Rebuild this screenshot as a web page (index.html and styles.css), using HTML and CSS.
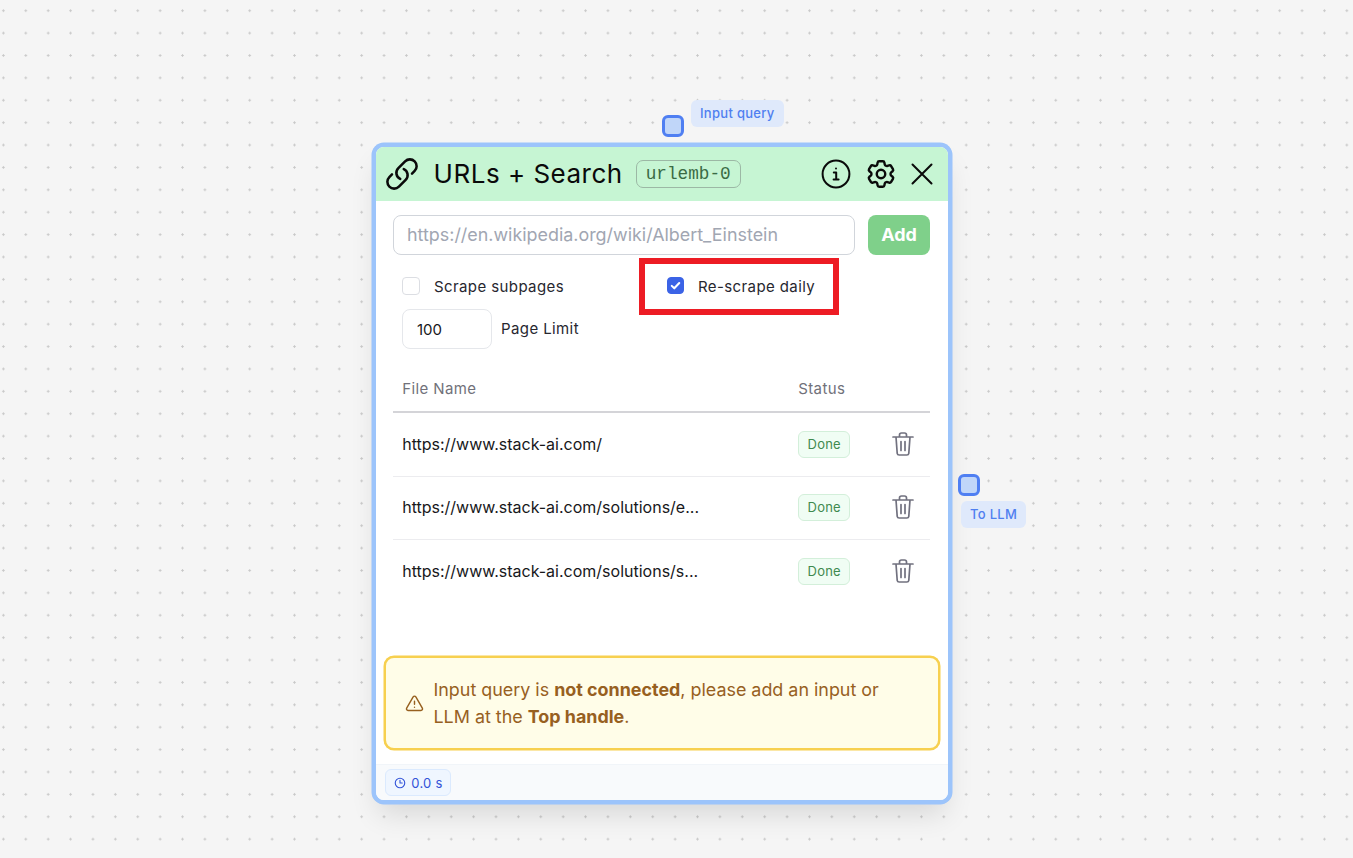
FILE: index.html
```html
<!DOCTYPE html>
<html lang="en">
<head>
<meta charset="utf-8">
<title>URLs + Search</title>
<link rel="stylesheet" href="styles.css">
</head>
<body>
<div class="canvas">
  <div class="node">
    <span class="handle handle-top"></span>
    <span class="tag tag-top">Input query</span>
    <span class="handle handle-right"></span>
    <span class="tag tag-right">To LLM</span>
    <header class="head">
      <svg class="ico-link" viewBox="0 0 24 24" fill="none" stroke="currentColor" stroke-width="1.7" stroke-linecap="round" stroke-linejoin="round"><path d="M13.19 8.688a4.5 4.5 0 0 1 1.242 7.244l-4.5 4.5a4.5 4.5 0 0 1-6.364-6.364l1.757-1.757m13.35-.622 1.757-1.757a4.5 4.5 0 0 0-6.364-6.364l-4.5 4.5a4.5 4.5 0 0 0 1.242 7.244"/></svg>
      <h1 class="title">URLs + Search</h1>
      <span class="code">urlemb-0</span>
      <div class="actions">
        <svg class="ico-act" viewBox="0 0 30 30" fill="none" stroke="currentColor" stroke-width="2" stroke-linecap="round" stroke-linejoin="round"><circle cx="15" cy="15" r="13.4"/><path d="M12.8 13.6h2.4v7m-2.6 0h5"/><circle cx="15" cy="9.4" r="1" fill="currentColor" stroke="none"/></svg>
        <svg class="ico-gear" viewBox="0 0 24 24" fill="none" stroke="currentColor" stroke-width="1.7" stroke-linecap="round" stroke-linejoin="round"><path d="M9.594 3.94c.09-.542.56-.94 1.11-.94h2.593c.55 0 1.02.398 1.11.94l.213 1.281c.063.374.313.686.645.87.074.04.147.083.22.127.325.196.72.257 1.075.124l1.217-.456a1.125 1.125 0 0 1 1.37.49l1.296 2.247a1.125 1.125 0 0 1-.26 1.431l-1.003.827c-.293.241-.438.613-.43.992a7.723 7.723 0 0 1 0 .255c-.008.378.137.75.43.991l1.004.827c.424.35.534.955.26 1.43l-1.298 2.247a1.125 1.125 0 0 1-1.369.491l-1.217-.456c-.355-.133-.75-.072-1.076.124a6.47 6.47 0 0 1-.22.128c-.331.183-.581.495-.644.869l-.213 1.281c-.09.543-.56.94-1.11.94h-2.594c-.55 0-1.019-.398-1.11-.94l-.213-1.281c-.062-.374-.312-.686-.644-.87a6.52 6.52 0 0 1-.22-.127c-.325-.196-.72-.257-1.076-.124l-1.217.456a1.125 1.125 0 0 1-1.369-.49l-1.297-2.247a1.125 1.125 0 0 1 .26-1.431l1.004-.827c.292-.24.437-.613.43-.991a6.932 6.932 0 0 1 0-.255c.007-.38-.138-.751-.43-.992l-1.004-.827a1.125 1.125 0 0 1-.26-1.43l1.297-2.247a1.125 1.125 0 0 1 1.37-.491l1.216.456c.356.133.751.072 1.076-.124.072-.044.146-.086.22-.128.332-.183.582-.495.644-.869l.214-1.28Z"/><circle cx="12" cy="12" r="3"/></svg>
        <svg class="ico-x" viewBox="0 0 22 22" fill="none" stroke="currentColor" stroke-width="2" stroke-linecap="round"><path d="M1.5 1.5l19 19M20.500 1.500l-19 19"/></svg>
      </div>
    </header>
    <main class="body">
      <div class="url-row">
        <input class="url" type="text" placeholder="https://en.wikipedia.org/wiki/Albert_Einstein">
        <button class="add" type="button">Add</button>
      </div>
      <div class="opts">
        <label class="opt opt-sub"><span class="box"></span>Scrape subpages</label>
        <label class="opt opt-daily"><span class="box box-on"><svg viewBox="0 0 16 16" fill="none" stroke="#fff" stroke-width="2.200" stroke-linecap="round" stroke-linejoin="round"><path d="M4 8.400l2.700 2.600L12 5.300"/></svg></span>Re-scrape daily</label>
      </div>
      <div class="limit">
        <span class="num">100</span>
        <span class="limit-label">Page Limit</span>
      </div>
      <div class="thead">
        <span class="c-name">File Name</span>
        <span class="c-status">Status</span>
      </div>
      <div class="row row-first">
        <span class="c-name">https://www.stack-ai.com/</span>
        <span class="c-status"><span class="done">Done</span></span>
        <svg class="trash" viewBox="0 0 24 26" fill="none" stroke="currentColor" stroke-width="1.700" stroke-linecap="round" stroke-linejoin="round"><path d="M2 6h20M5 6l1.200 16.300a2 2 0 0 0 2 1.700h7.600a2 2 0 0 0 2-1.700L19 6M8.500 5.500V4a2 2 0 0 1 2-2h3a2 2 0 0 1 2 2v1.500M10 10.500v9M14 10.500v9"/></svg>
      </div>
      <div class="row">
        <span class="c-name">https://www.stack-ai.com/solutions/e...</span>
        <span class="c-status"><span class="done">Done</span></span>
        <svg class="trash" viewBox="0 0 24 26" fill="none" stroke="currentColor" stroke-width="1.700" stroke-linecap="round" stroke-linejoin="round"><path d="M2 6h20M5 6l1.200 16.300a2 2 0 0 0 2 1.700h7.600a2 2 0 0 0 2-1.700L19 6M8.500 5.500V4a2 2 0 0 1 2-2h3a2 2 0 0 1 2 2v1.500M10 10.500v9M14 10.500v9"/></svg>
      </div>
      <div class="row row-last">
        <span class="c-name">https://www.stack-ai.com/solutions/s...</span>
        <span class="c-status"><span class="done">Done</span></span>
        <svg class="trash" viewBox="0 0 24 26" fill="none" stroke="currentColor" stroke-width="1.700" stroke-linecap="round" stroke-linejoin="round"><path d="M2 6h20M5 6l1.200 16.300a2 2 0 0 0 2 1.700h7.600a2 2 0 0 0 2-1.700L19 6M8.500 5.500V4a2 2 0 0 1 2-2h3a2 2 0 0 1 2 2v1.500M10 10.500v9M14 10.500v9"/></svg>
      </div>
      <div class="warn">
        <svg class="ico-warn" viewBox="0 0 24 24" fill="none" stroke="currentColor" stroke-width="1.800" stroke-linecap="round" stroke-linejoin="round"><path d="M12 9v4m0 3.800h.01M10.300 3.600 2.100 17.800A2 2 0 0 0 3.800 20.800h16.400a2 2 0 0 0 1.700-3L13.700 3.600a2 2 0 0 0-3.400 0Z"/></svg>
        <p class="warn-text">Input query is <b>not connected</b>, please add an input or LLM at the <b>Top handle</b>.</p>
      </div>
    </main>
    <footer class="foot">
      <span class="time">
        <svg class="ico-clock" viewBox="0 0 24 24" fill="none" stroke="currentColor" stroke-width="2.200" stroke-linecap="round" stroke-linejoin="round"><circle cx="12" cy="12" r="9.500"/><path d="M12 6.500V12h4.500"/></svg>
        0.0 s
      </span>
    </footer>
    <div class="redbox"></div>
  </div>
</div>
</body>
</html>
```

FILE: styles.css
```css
* { box-sizing: border-box; }
html, body { margin: 0; height: 100%; }
body { font-family: Inter, "Liberation Sans", sans-serif; color: #18181b; overflow: hidden; }

.canvas {
  position: relative;
  width: 100%;
  height: 100%;
  background-color: #f5f5f5;
  background-image: radial-gradient(circle at center, #c8c8c8 0, #c8c8c8 0.9px, transparent 1.4px);
  background-size: 22.4px 22.4px;
  background-position: -7.8px -0.5px;
}

.node {
  position: absolute;
  left: 372px;
  top: 143px;
  width: 580px;
  height: 661px;
  display: flex;
  flex-direction: column;
  background: #fff;
  border: 4px solid #9cc4fb;
  border-radius: 12px;
  box-shadow: 0 0 0 0.5px #9cc4fb, 0 16px 28px -6px rgba(0, 0, 0, 0.12);
}

.handle {
  position: absolute;
  width: 22px;
  height: 22px;
  background: #c0d6f9;
  border: 3px solid #4f7ff2;
  border-radius: 6px;
}
.handle-top { left: 286px; top: -32px; }
.handle-right { left: 582px; top: 327px; }

.tag {
  position: absolute;
  height: 27px;
  padding: 0 9px 2px;
  display: flex;
  align-items: center;
  font-size: 13px;
  font-weight: 500;
  letter-spacing: 0.3px;
  white-space: nowrap;
  color: #4f7ff0;
  background: #dfe9fb;
  border-radius: 6px;
}
.tag-top { left: 315px; top: -47px; }
.tag-right { left: 585px; top: 354px; }

.head {
  flex: none;
  height: 54px;
  display: flex;
  align-items: center;
  padding: 0 15px 0 8px;
  background: #c6f5d3;
  border-radius: 8px 8px 0 0;
  color: #0a0a0a;
}
.ico-link { width: 36px; height: 36px; flex: none; }
.title { margin: 0 0 0 13.6px; font-size: 26px; line-height: 32px; font-weight: 400; letter-spacing: 0.5px; white-space: nowrap; }
.code {
  margin-left: 13px;
  height: 28px;
  padding: 0 9px;
  display: flex;
  align-items: center;
  font-family: "Liberation Mono", monospace;
  font-size: 17.7px;
  color: #3a6b45;
  border: 1px solid #9cb8a5;
  border-radius: 7px;
}
.actions { margin-left: auto; display: flex; align-items: center; }
.ico-act { width: 30px; height: 30px; }
.ico-gear { width: 34px; height: 34px; margin-left: 13px; }
.ico-x { width: 22px; height: 22px; margin-left: 13px; }

.body { flex: 1; display: flex; flex-direction: column; min-height: 0; }

.url-row { display: flex; gap: 13px; padding: 14px 18px 0 17px; }
.url {
  flex: 1;
  min-width: 0;
  height: 40px;
  padding: 0 13px 2px;
  font: 400 17.900px Inter, "Liberation Sans", sans-serif;
  color: #18181b;
  background: #fff;
  border: 1px solid #d1d5db;
  border-radius: 8px;
  outline: none;
}
.url::placeholder { color: #a1a6b2; opacity: 1; }
.add {
  flex: none;
  width: 62px;
  height: 40px;
  padding: 0 0 2px;
  font: 700 18px Inter, "Liberation Sans", sans-serif;
  color: #fff;
  background: #7fd08a;
  border: 0;
  border-radius: 8px;
}

.opts { display: flex; padding: 22px 0 0 26px; height: 54px; font-size: 15px; letter-spacing: 0.4px; color: #27272f; }
.opt { display: flex; align-items: flex-start; gap: 14px; line-height: 20px; white-space: nowrap; }
.opt-sub { width: 265px; }
.box {
  flex: none;
  width: 18px;
  height: 18px;
  background: #fff;
  border: 1px solid #dcdee3;
  border-radius: 4px;
}
.box-on {
  width: 17px;
  height: 17px;
  background: #3b63e6;
  border-color: #3b63e6;
  display: flex;
  align-items: center;
  justify-content: center;
}
.box-on svg { width: 15px; height: 15px; }

.limit { display: flex; align-items: center; gap: 9px; padding-left: 26px; font-size: 15px; color: #27272f; }
.limit-label { letter-spacing: 0.4px; margin-top: -1px; }
.num {
  width: 90px;
  height: 40px;
  padding: 0 0 0 14px;
  display: flex;
  align-items: center;
  color: #18181b;
  background: #fff;
  border: 1px solid #e5e7eb;
  border-radius: 8px;
}

.thead, .row { margin: 0 18px 0 17px; padding-left: 9.2px; display: flex; align-items: center; }
.thead { height: 64px; padding-top: 17px; font-size: 15px; letter-spacing: 0.4px; color: #71717a; border-bottom: 2px solid #d4d4d8; }
.row { height: 63px; padding-bottom: 1px; font-size: 16px; color: #18181b; border-bottom: 1px solid #ececef; }
.row-first { height: 64px; padding-bottom: 0; }
.row-last { padding-bottom: 0; border-bottom: 0; }
.row .c-name { margin-bottom: 2px; }
.c-name { width: 396px; white-space: nowrap; }
.c-status { width: 92.8px; display: flex; }
.done {
  height: 27px;
  width: 52px;
  margin-bottom: 1px;
  padding-bottom: 1px;
  display: flex;
  align-items: center;
  justify-content: center;
  font-size: 13px;
  font-weight: 400;
  letter-spacing: 0.2px;
  color: #3f8a4f;
  background: #f0fdf4;
  border: 1px solid #d3efda;
  border-radius: 6px;
}
.trash { width: 24px; height: 26px; margin-bottom: 1px; color: #71717f; }

.warn {
  margin: auto 8px 14px;
  height: 94px;
  padding: 0 0 0 19px;
  display: flex;
  align-items: center;
  gap: 9.5px;
  color: #97601f;
  background: #fffde8;
  border: 2px solid #f7d04f;
  border-radius: 10px;
  box-shadow: 0 0 0 0.5px #f7d04f;
}
.ico-warn { flex: none; width: 19px; height: 19px; }
.warn-text { margin: 0; width: 470px; font-size: 17.900px; line-height: 27px; }

.foot {
  flex: none;
  height: 36px;
  padding: 4px 0 0 9px;
  background: #f8fafc;
  border-top: 1px solid #f1f5f9;
  border-radius: 0 0 8px 8px;
}
.time {
  width: 66px;
  height: 27px;
  padding-left: 1px;
  display: flex;
  align-items: center;
  justify-content: center;
  gap: 5px;
  font-size: 13px;
  font-weight: 400;
  letter-spacing: 0.3px;
  color: #3253d8;
  background: #eff6ff;
  border: 1px solid #dbeafe;
  border-radius: 6px;
}
.ico-clock { width: 12px; height: 12px; flex: none; }

.redbox {
  position: absolute;
  left: 263px;
  top: 111px;
  width: 200px;
  height: 57px;
  border: 6px solid #ed1c24;
  pointer-events: none;
}
```
